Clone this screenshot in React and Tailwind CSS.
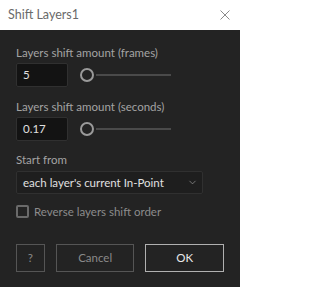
import { ChevronDown } from 'lucide-react';

function Slider() {
    return (
        <div className="flex items-center ml-[12px]">
            <div className="w-[14px] h-[14px] rounded-full border-2 border-[#9a9a9a]" />
            <div className="w-[75px] h-[2px] ml-[2px] bg-[#4a4a4a]" />
        </div>
    );
}

function NumberRow({ label, value }) {
    return (
        <div className="flex flex-col">
            <div className="text-[11.5px] leading-[16px] text-[#a3a3a3]">{label}</div>
            <div className="flex items-center mt-[2px]">
                <div className="w-[52px] h-[24px] rounded-[2px] border border-[#303030] bg-[#131313] pl-[6px] text-[11.5px] leading-[22px] text-[#e0e0e0]">
                    {value}
                </div>
                <Slider />
            </div>
        </div>
    );
}

export default function App() {
    return (
        <div className="w-[240px] h-[287px] flex flex-col bg-[#232323] font-['Lato',sans-serif]">
            <div className="h-[30px] shrink-0 bg-white flex items-center justify-between pl-[8px] pr-[10px]">
                <span className="text-[12.5px] text-[#6a6a6a]">Shift Layers1</span>
                <svg width="10" height="10" viewBox="0 0 10 10" className="stroke-[#8a8a8a]">
                    <path d="M0.5 0.5 L9.5 9.5 M9.5 0.5 L0.5 9.5" strokeWidth="1" />
                </svg>
            </div>

            <div className="flex flex-col px-[16px] pt-[15px]">
                <NumberRow label="Layers shift amount (frames)" value="5" />
                <div className="mt-[12px]">
                    <NumberRow label="Layers shift amount (seconds)" value="0.17" />
                </div>

                <div className="mt-[11px] text-[11.5px] leading-[16px] text-[#a3a3a3]">Start from</div>
                <div className="mt-[3px] w-[187px] h-[23px] rounded-[2px] border border-[#303030] bg-[#1e1e1e] flex items-center justify-between pl-[6px] pr-[4px]">
                    <span className="text-[11.5px] text-[#e0e0e0]">each layer's current In-Point</span>
                    <ChevronDown size={11} strokeWidth={1.5} className="text-[#9a9a9a]" />
                </div>

                <div className="mt-[11px] h-[13px] flex items-center gap-[5px]">
                    <div className="w-[13px] h-[13px] rounded-[2px] border-2 border-[#6a6a6a]" />
                    <span className="text-[11.5px] leading-[13px] text-[#8c8c8c]">Reverse layers shift order</span>
                </div>

                <div className="mt-[26px] flex gap-[11px]">
                    <div className="w-[29px] h-[28px] border border-[#555] flex items-center justify-center text-[11.5px] text-[#8a8a8a]">?</div>
                    <div className="w-[79px] h-[28px] border border-[#555] flex items-center justify-center text-[11.5px] text-[#8a8a8a]">Cancel</div>
                    <div className="w-[79px] h-[28px] border border-[#b0b0b0] flex items-center justify-center text-[11.5px] text-[#eaeaea]">OK</div>
                </div>
            </div>
        </div>
    );
}
